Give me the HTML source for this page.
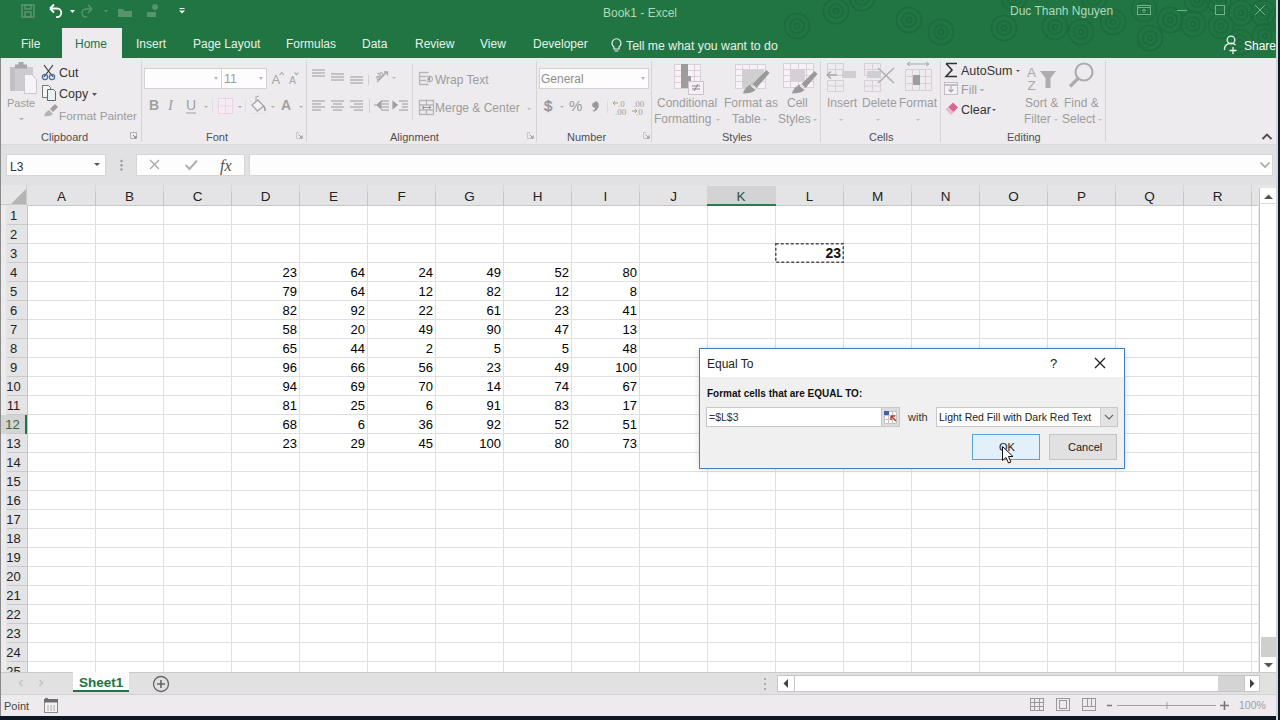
<!DOCTYPE html><html><head><meta charset="utf-8"><style>
*{margin:0;padding:0;box-sizing:border-box}
html,body{width:1280px;height:720px;overflow:hidden;position:relative;background:#fff;font-family:"Liberation Sans",sans-serif;color:#262626}
.a{position:absolute;white-space:nowrap}
#title{position:absolute;left:0;top:0;width:1280px;height:58px;background:#217542;overflow:hidden}
#ribbon{position:absolute;left:0;top:58px;width:1280px;height:87px;background:#edebee;border-bottom:1px solid #d9d9d9}
#band{position:absolute;left:0;top:145px;width:1280px;height:41px;background:#e1e0e2}
#colhdr{position:absolute;left:0;top:185px;width:1258px;height:21px;background:#e4e4e6;border-bottom:1px solid #c6c6c6}
.ch{position:absolute;top:0;width:68px;height:20px;padding-right:1px;text-align:center;font-size:13.5px;line-height:23px;color:#222;background:linear-gradient(#d6d6d6,#d6d6d6) no-repeat right 0 top 0/1px 7px,linear-gradient(#c4c4c4,#c4c4c4) no-repeat right 0 top 7px/1px 13px}
.ch.sel{background:#d3d3d3;border-bottom:2px solid #2e7a50;color:#2f4f3f;top:1px;height:20px;line-height:21px;width:69px;margin-left:-1px}
#rowhdr{position:absolute;left:0;top:205px;width:28px;height:467px;background:linear-gradient(to right,#8e8e8e 0 1px,#ececee 1px 6px,#e4e4e6 6px);border-right:1px solid #c6c6c6;overflow:hidden}
.rh{position:absolute;left:0;width:27px;height:19px;text-align:center;font-size:13px;line-height:20px;color:#222;background:linear-gradient(to right,transparent 7px,#cacaca 7px) no-repeat left 0 bottom 0/27px 1px}
#grid{position:absolute;left:28px;top:206px;width:1230px;height:466px;overflow:hidden;background-color:#fff;
background-image:linear-gradient(to right, transparent 67px, #dfdfdf 67px, #dfdfdf 68px, transparent 68px),linear-gradient(to bottom, transparent 18px, #dfdfdf 18px, #dfdfdf 19px, transparent 19px);
background-size:68px 19px, 68px 19px}
.cell{position:absolute;width:68px;height:19px;text-align:right;padding-right:3px;font-size:13px;line-height:20px;color:#000}
#l3{position:absolute;width:69px;height:20px;border:1px solid transparent;text-align:right;padding-right:2px;font-size:14px;line-height:19px;color:#111}
.tab{top:36px;font-size:12px;line-height:16px;color:#e6f3ea}
.r{position:absolute;white-space:nowrap;font-size:12px;line-height:14px;color:#333}
.d{color:#9c9c9c}
.gl{position:absolute;white-space:nowrap;font-size:11px;line-height:14px;color:#505050;top:130px}
.sep{position:absolute;top:61px;width:1px;height:81px;background:#d4d4d4}
.box{position:absolute;background:#fdfdfd;border:1px solid #d2d2d2}
.dd{position:absolute;width:0;height:0;border-left:2.5px solid transparent;border-right:2.5px solid transparent;border-top:3px solid #777}
.ddd{border-top-color:#b5b5b5}
.rh.sel{background-color:#d4d4d4;color:#2a6845;border-right:2px solid #217346}

</style></head><body>
<div id="title">
<svg class="a" style="left:0;top:0" width="1280" height="58">
<g fill="none" stroke="#1c6a3d" stroke-width="1.6" opacity="0.85"><circle cx="797" cy="26" r="2.5"/><circle cx="797" cy="26" r="7"/><circle cx="797" cy="26" r="12.5"/><circle cx="836" cy="11" r="2.5"/><circle cx="836" cy="11" r="7"/><circle cx="836" cy="11" r="12.5"/><circle cx="862" cy="-2" r="2.5"/><circle cx="862" cy="-2" r="7"/><circle cx="862" cy="-2" r="12.5"/><circle cx="909" cy="20" r="2.5"/><circle cx="909" cy="20" r="7"/><circle cx="909" cy="20" r="12.5"/><circle cx="941" cy="32" r="2.5"/><circle cx="941" cy="32" r="7"/><circle cx="941" cy="32" r="12.5"/><circle cx="1004" cy="28" r="2.5"/><circle cx="1004" cy="28" r="7"/><circle cx="1004" cy="28" r="12.5"/><circle cx="1014" cy="-2" r="2.5"/><circle cx="1014" cy="-2" r="7"/><circle cx="1014" cy="-2" r="12.5"/><circle cx="1055" cy="27" r="2.5"/><circle cx="1055" cy="27" r="7"/><circle cx="1055" cy="27" r="12.5"/><circle cx="1081" cy="32" r="2.5"/><circle cx="1081" cy="32" r="7"/><circle cx="1081" cy="32" r="12.5"/><circle cx="1094" cy="-2" r="2.5"/><circle cx="1094" cy="-2" r="7"/><circle cx="1094" cy="-2" r="12.5"/><circle cx="1113" cy="22" r="2.5"/><circle cx="1113" cy="22" r="7"/><circle cx="1113" cy="22" r="12.5"/><circle cx="1144" cy="9" r="2.5"/><circle cx="1144" cy="9" r="7"/><circle cx="1144" cy="9" r="12.5"/><circle cx="1170" cy="20" r="2.5"/><circle cx="1170" cy="20" r="7"/><circle cx="1170" cy="20" r="12.5"/><circle cx="1193" cy="24" r="2.5"/><circle cx="1193" cy="24" r="7"/><circle cx="1193" cy="24" r="12.5"/><circle cx="1197" cy="0" r="2.5"/><circle cx="1197" cy="0" r="7"/><circle cx="1197" cy="0" r="12.5"/><circle cx="1219" cy="0" r="2.5"/><circle cx="1219" cy="0" r="7"/><circle cx="1219" cy="0" r="12.5"/><circle cx="1221" cy="26" r="2.5"/><circle cx="1221" cy="26" r="7"/><circle cx="1221" cy="26" r="12.5"/><circle cx="1241" cy="13" r="2.5"/><circle cx="1241" cy="13" r="7"/><circle cx="1241" cy="13" r="12.5"/><circle cx="1263" cy="13" r="2.5"/><circle cx="1263" cy="13" r="7"/><circle cx="1263" cy="13" r="12.5"/><circle cx="1265" cy="36" r="2.5"/><circle cx="1265" cy="36" r="7"/><circle cx="1265" cy="36" r="12.5"/><circle cx="1150" cy="38" r="2.5"/><circle cx="1150" cy="38" r="7"/><circle cx="1150" cy="38" r="12.5"/><circle cx="1240" cy="42" r="2.5"/><circle cx="1240" cy="42" r="7"/><circle cx="1240" cy="42" r="12.5"/><circle cx="1280" cy="20" r="2.5"/><circle cx="1280" cy="20" r="7"/><circle cx="1280" cy="20" r="12.5"/></g>
<!-- QAT -->
<g fill="none" stroke="#56946c" stroke-width="1.6">
<rect x="22" y="5" width="12" height="12"/><rect x="25" y="5" width="6" height="4"/><rect x="25" y="12" width="6" height="5"/>
</g>
<path d="M50 8.5 L54 4.5 M50 8.5 L54 12.5 M50 8.5 H57 a4.3 4.3 0 0 1 0 8.6 H56" fill="none" stroke="#fff" stroke-width="1.8"/>
<path d="M70 10 h5 l-2.5 3z" fill="#fff"/>
<path d="M92 9 L88 5 M92 9 L88 13 M92 9 H86 a4 4 0 0 0 0 8 H87" fill="none" stroke="#56946c" stroke-width="1.6"/>
<path d="M104 10 h4 l-2 2.5z" fill="#56946c"/>
<path d="M118 9 h5 l1 2 h8 v6 h-14z" fill="#56946c"/>
<path d="M147 12 h9 v5 h-9z M152 7 a3 3 0 1 1 6 0 a3 3 0 1 1 -6 0" fill="#56946c"/>
<path d="M179.5 8.5 h5" stroke="#fff" stroke-width="1"/><path d="M179 10.5 h6 l-3 3z" fill="#fff"/>
</svg>
<div class="a" style="left:603px;top:5px;font-size:12px;line-height:16px;color:#b2d8bc">Book1 - Excel</div>
<div class="a" style="left:1010px;top:3px;font-size:12px;line-height:16px;color:#b2d8bc">Duc Thanh Nguyen</div>
<svg class="a" style="left:1130px;top:0" width="150" height="58">
<g fill="none" stroke="#74b08a" stroke-width="1">
<rect x="7.5" y="5.5" width="13" height="9"/><path d="M7.5 7.5 h13 M14 13 v-4 M12 11 l2 -2 l2 2"/>
<path d="M47 10.5 h10"/>
<rect x="85.5" y="5.5" width="9" height="9"/>
<path d="M125 5 l10 10 M135 5 l-10 10"/>
</g>
<g fill="none" stroke="#eef5f0" stroke-width="1.3">
<circle cx="101" cy="40" r="3.8"/><path d="M94.5 50 a6.5 6 0 0 1 11 -5 M104 43 v0 M103 47 v7 M99.5 50.5 h7"/>
</g>
</svg>
<div class="a" style="left:1244px;top:38px;font-size:12px;line-height:16px;color:#fff">Share</div>
<!-- tabs -->
<div class="a" style="left:62px;top:28px;width:60px;height:30px;background:#edebee"></div>
<div class="a tab" style="left:21px">File</div>
<div class="a tab" style="left:75px;color:#217346">Home</div>
<div class="a tab" style="left:136px">Insert</div>
<div class="a tab" style="left:193px">Page Layout</div>
<div class="a tab" style="left:286px">Formulas</div>
<div class="a tab" style="left:362px">Data</div>
<div class="a tab" style="left:415px">Review</div>
<div class="a tab" style="left:480px">View</div>
<div class="a tab" style="left:533px">Developer</div>
<svg class="a" style="left:609px;top:37px" width="16" height="18"><path d="M5 12 v-2 a4.5 4.5 0 1 1 5 0 v2z M5.5 14 h4" fill="none" stroke="#e8f1ea" stroke-width="1.2"/></svg>
<div class="a tab" style="left:626px;top:38px;font-size:12.3px">Tell me what you want to do</div>
</div>
<div id="ribbon"></div>
<div id="band"></div>
<!-- formula bar -->
<div class="box" style="left:6px;top:154px;width:100px;height:22px;border-color:#d6d6d6"></div>
<div class="r" style="left:10px;top:160px;font-size:12px;color:#333">L3</div>
<div class="dd" style="left:94px;top:163px;border-left-width:3.5px;border-right-width:3.5px;border-top-width:3.5px;border-top-color:#555"></div>
<svg class="a" style="left:118px;top:158px" width="8" height="16"><circle cx="3.5" cy="3" r="1.2" fill="#999"/><circle cx="3.5" cy="7.3" r="1.2" fill="#999"/><circle cx="3.5" cy="11.5" r="1.2" fill="#999"/></svg>
<div class="box" style="left:136px;top:154px;width:109px;height:22px;border-color:#d6d6d6"></div>
<svg class="a" style="left:137px;top:154px" width="108" height="22">
<path d="M13 6 l9 9 M22 6 l-9 9" stroke="#a8a8a8" stroke-width="1.3"/>
<path d="M48.5 11 l4 4 l7.5 -8.5" stroke="#b0b0b0" stroke-width="2" fill="none"/>
<text x="83" y="16.5" font-family="Liberation Serif" font-style="italic" font-size="16" fill="#505050">fx</text>
</svg>
<div class="box" style="left:249px;top:154px;width:1024px;height:22px;border-color:#d6d6d6"></div>
<svg class="a" style="left:1258px;top:159px" width="14" height="12"><path d="M2.5 3.5 l4.5 4.5 l4.5 -4.5" fill="none" stroke="#a8a8a8" stroke-width="1.7"/></svg>

<!-- Clipboard -->
<svg class="a" style="left:0;top:58px" width="141" height="86">
<path d="M10 9 h23 v24 h-23z" fill="#cdcbcf"/>
<path d="M10 9 h5 v24 h-5z" fill="#c2c0c4"/>
<path d="M15 6.5 h12 v4 h-12z" fill="#a8a6aa"/><path d="M18.5 4 h5 v3 h-5z" fill="#a8a6aa"/>
<path d="M24.5 16.5 h7 l5 5 v14 h-12z" fill="#f8f3f8" stroke="#cfc8cf" stroke-width="1"/>
<path d="M44 7 l9 12 M53 7 l-9 12" stroke="#3a3a3a" stroke-width="1.2" fill="none"/>
<circle cx="45" cy="19" r="2.6" fill="none" stroke="#4a72a8" stroke-width="1.3"/><circle cx="52" cy="19" r="2.6" fill="none" stroke="#4a72a8" stroke-width="1.3"/>
<path d="M42.5 27.5 h6 l2 2 v10 h-8z" fill="#f5f5f5" stroke="#777" stroke-width="1"/>
<path d="M47.5 31.5 h6 l2 2 v9 h-8z" fill="#e8f2f2" stroke="#666" stroke-width="1"/>
<path d="M44 58 q1 -4 5 -6 l4 4 q-3 3 -9 2z" fill="#b4b4b4"/><path d="M50 51 l5 -5 l3 3 l-5 5z" fill="#a0a0a0"/>
<path d="M19 60 h5 l-2.5 2.5z" fill="#b0b0b0"/>
<path d="M92 35 h5 l-2.5 3z" fill="#555"/>
<path d="M130.5 74.5 h6 v6 h-6z" fill="none" stroke="#b0b0b0" stroke-width="1"/><path d="M133 77 l3 3 M136 78 v2 h-2" stroke="#808080" fill="none"/>
</svg>
<div class="r d" style="left:7px;top:96px;font-size:11px">Paste</div>
<div class="r" style="left:59px;top:66px;font-size:12.5px">Cut</div>
<div class="r" style="left:59px;top:87px;font-size:12.5px">Copy</div>
<div class="r d" style="left:59px;top:109px;font-size:11.8px">Format Painter</div>
<div class="gl" style="left:41px">Clipboard</div>
<div class="sep" style="left:141px"></div>
<!-- Font -->
<div class="box" style="left:144px;top:68px;width:78px;height:21px"></div>
<div class="box" style="left:221px;top:68px;width:46px;height:21px"></div>
<div class="dd ddd" style="left:214px;top:77px"></div>
<div class="dd ddd" style="left:259px;top:77px"></div>
<div class="r d" style="left:224px;top:72px;font-size:12.5px">11</div>
<svg class="a" style="left:142px;top:58px" width="165" height="86">
<text x="129.5" y="25.5" font-family="Liberation Sans" font-size="13" fill="#a6a6a6">A</text>
<path d="M137.5 17 l2.2 -2.5 l2.2 2.5" stroke="#a6a6a6" stroke-width="1.1" fill="none"/>
<text x="147" y="25.5" font-family="Liberation Sans" font-size="10.5" fill="#a6a6a6">A</text>
<path d="M152.5 14.5 l2 2.2 l2 -2.2" stroke="#a6a6a6" stroke-width="1.1" fill="none"/>
<text x="7" y="52" font-family="Liberation Sans" font-weight="bold" font-size="14" fill="#a0a0a0">B</text>
<text x="26" y="52" font-family="Liberation Serif" font-style="italic" font-size="15" fill="#a0a0a0">I</text>
<text x="44" y="52" font-family="Liberation Sans" font-size="14" fill="#a0a0a0">U</text>
<path d="M44 55 h10" stroke="#a0a0a0" stroke-width="1"/>
<path d="M62 48 h4 l-2 2z M96 48 h4 l-2 2z M129 48 h4 l-2 2z M157 48 h4 l-2 2z" fill="#b0b0b0"/>
<path d="M70.5 41 v14 M103.5 41 v14" stroke="#e0e0e0"/>
<rect x="76.5" y="40.5" width="14" height="15" fill="#f6eef5" stroke="#ecd2e6"/><path d="M83.5 40.5 v15 M76.5 48 h14" stroke="#ecd2e6"/><path d="M80 40.5 v15 M87 40.5 v15 M76.5 44 h14 M76.5 52 h14" stroke="#f2e2ee" stroke-dasharray="1 1"/>
<path d="M110 47 l6 -5 l5.5 6 l-6 5z" fill="#f4f4f4" stroke="#a8a8a8" stroke-width="1.3"/><path d="M114 43 v-4 l3 -1" stroke="#b0b0b0" fill="none" stroke-width="1.2"/><path d="M121.5 48 q2 2 1.5 5" stroke="#9a9a9a" stroke-width="1.5" fill="none"/><path d="M109 55.5 h15" stroke="#e4e4e4" stroke-width="1.5"/>
<text x="139" y="52" font-family="Liberation Sans" font-weight="bold" font-size="14" fill="#a0a0a0">A</text>
<path d="M157.5 74.5 h-3 v6 h6 v-3" fill="none" stroke="#c8c8c8" stroke-width="1"/><path d="M156.5 76.5 l3.5 3.5 M160.0 77.5 v2.5 h-2.5" fill="none" stroke="#9a9a9a" stroke-width="1"/>
</svg>
<div class="gl" style="left:206px">Font</div>
<div class="sep" style="left:306px"></div>
<!-- Alignment -->
<svg class="a" style="left:306px;top:58px" width="230" height="86">
<g stroke="#b6b6b6" stroke-width="1.3" fill="none">
<path d="M6 12 h13 M6 15 h13 M6 18 h13"/>
<path d="M25 16 h13 M25 19 h13 M25 22 h13"/>
<path d="M44 19 h13 M44 22 h13 M44 25 h13"/>
<path d="M62.5 17 v10" stroke="#d0d0d0" stroke-width="1"/>
<path d="M6 43 h13 M6 46 h9 M6 49 h13 M6 52 h9"/>
<path d="M25 43 h13 M27 46 h9 M25 49 h13 M27 52 h9"/>
<path d="M44 43 h13 M48 46 h9 M44 49 h13 M48 52 h9"/>
<path d="M63.5 41 v14" stroke="#d0d0d0" stroke-width="1"/>
<path d="M75 43 h8 M76 46 h7 M76 49 h7 M75 52 h8"/>
<path d="M93 43 h9 M96 46 h6 M96 49 h6 M93 52 h9"/>
<path d="M113.5 14.5 h9 M113.5 18.5 h7 M113.5 22.5 h7 M113.5 26.5 h9 M113.5 14 v13"/>
<path d="M121 18.5 h3 a2.5 2.5 0 0 1 0 5 h-3"/>
<path d="M113.5 42.5 h14 v14 h-14z M113.5 47 h14 M113.5 52 h14 M120.5 42.5 v4.5 M120.5 52 v4.5"/>
</g>
<path d="M71 47 l4 -3.5 v7z M68 47 h5" fill="#a0a0a0" stroke="#a0a0a0" stroke-width="1.2"/>
<path d="M91 47 l-4 -3.5 v7z M88 47 h4" fill="#a0a0a0" stroke="#a0a0a0" stroke-width="1.2"/>
<path d="M106.5 6 v56" stroke="#d8d8d8" stroke-width="1"/>
<path d="M71 24 l10 -10 M78 14 h3.5 v3.5" stroke="#a8a8a8" stroke-width="1.3" fill="none"/>
<text x="69" y="20" font-family="Liberation Sans" font-size="8" font-weight="bold" fill="#a8a8a8" transform="rotate(-45 74 18)">ab</text>
<path d="M116 49.5 h9 M116 49.5 l2 -1.5 M116 49.5 l2 1.5 M125 49.5 l-2 -1.5 M125 49.5 l-2 1.5" stroke="#999" stroke-width="1" fill="none"/>
<path d="M121 21 l3 -2.5 v5z" fill="#999"/>
<path d="M86 19 h4 l-2 2z M221 50 h4 l-2 2z" fill="#b8b8b8"/>
<path d="M224.5 74.5 h-3 v6 h6 v-3" fill="none" stroke="#c8c8c8" stroke-width="1"/><path d="M223.5 76.5 l3.5 3.5 M227.0 77.5 v2.5 h-2.5" fill="none" stroke="#9a9a9a" stroke-width="1"/>
</svg>
<div class="r d" style="left:435px;top:73px;font-size:12px">Wrap Text</div>
<div class="r d" style="left:435px;top:101px;font-size:12px">Merge &amp; Center</div>
<div class="gl" style="left:390px">Alignment</div>
<div class="sep" style="left:536px"></div>
<!-- Number -->
<div class="box" style="left:539px;top:68px;width:110px;height:21px"></div>
<div class="r d" style="left:541px;top:72px;font-size:12px;color:#8f8f8f">General</div>
<div class="dd ddd" style="left:641px;top:77px"></div>
<svg class="a" style="left:536px;top:58px" width="115" height="86">
<text x="8" y="53" font-family="Liberation Sans" font-size="15" fill="#959595" stroke="#959595" stroke-width="0.4">$</text>
<path d="M24 48 h4 l-2 2z" fill="#b0b0b0"/>
<text x="33" y="53" font-family="Liberation Sans" font-size="15" fill="#9a9a9a">%</text>
<path d="M59 44 a3 3 0 1 1 0 6 M61.8 47.5 q0 4 -4.5 5.5" fill="#9a9a9a" stroke="#9a9a9a" stroke-width="1.6"/><circle cx="59" cy="47" r="2.8" fill="#9a9a9a"/>
<path d="M71.5 43 v12" stroke="#dcdcdc"/>
<g font-family="Liberation Serif" font-size="9" fill="#a0a0a0"><text x="82" y="49">.0</text><text x="79" y="57">.00</text><text x="97" y="49">.00</text><text x="100" y="57">.0</text></g>
<path d="M77 45 h5 M77 45 l2 -2 M77 45 l2 2 M96 53 h5 M101 53 l-2 -2 M101 53 l-2 2" stroke="#a0a0a0" fill="none"/>
<path d="M110.5 74.5 h-3 v6 h6 v-3" fill="none" stroke="#c8c8c8" stroke-width="1"/><path d="M109.5 76.5 l3.5 3.5 M113.0 77.5 v2.5 h-2.5" fill="none" stroke="#9a9a9a" stroke-width="1"/>
</svg>
<div class="gl" style="left:567px">Number</div>
<div class="sep" style="left:651px"></div>
<!-- Styles -->
<svg class="a" style="left:651px;top:58px" width="170" height="86">
<g stroke="#dccfdc" fill="#f8f2f8">
<rect x="23.5" y="6.5" width="26" height="24"/>
<rect x="84.5" y="6.5" width="30" height="24"/>
<rect x="132.5" y="5.5" width="30" height="24"/>
</g>
<g stroke="#dccfdc" stroke-width="1">
<path d="M23.5 12.5 h26 M23.5 18.5 h26 M23.5 24.5 h26 M30.5 6.5 v24 M36.5 6.5 v24 M43.5 6.5 v24"/>
<path d="M84.5 11.5 h30 M84.5 17.5 h30 M84.5 23.5 h30 M91.5 6.5 v24 M98.5 6.5 v24 M106.5 6.5 v24"/>
<path d="M132.5 11.5 h30 M132.5 17.5 h30 M132.5 23.5 h30 M139.5 5.5 v24 M147.5 5.5 v24 M155.5 5.5 v24"/>
</g>
<path d="M30 6 h7 v12 h3 v12 h-10z" fill="#9c9c9c"/>
<rect x="37.5" y="23.5" width="15" height="13" fill="#f6eff6" stroke="#cfc3cf"/>
<path d="M41 28 h8 M41 31 h8 M47 26 l-4 7" stroke="#888" stroke-width="1"/>
<path d="M91 12 h22 v2 l-13 16 h-9z" fill="#cfcfcf"/>
<path d="M92 35.5 q1.5 -6.5 8 -9 l5.5 4.5 q-3.5 4.5 -13.5 4.5z" fill="#9a9a9a"/><path d="M101.5 26 l14 -14 l3 3 l-13 15z" fill="#9a9a9a"/><path d="M100 27.5 l5 4" stroke="#f4f0f4" stroke-width="1.2"/>
<rect x="139" y="11" width="15" height="12" fill="#d6d0d6"/>
<path d="M141 35.5 q1.5 -6.5 8 -9 l5.5 4.5 q-3.5 4.5 -13.5 4.5z" fill="#9a9a9a"/><path d="M150.5 26 l13 -13 l3 3 l-12 14z" fill="#9a9a9a"/><path d="M149 27.5 l5 4" stroke="#f4f0f4" stroke-width="1.2"/>
<path d="M65 61 h4 l-2 2z M112 61 h4 l-2 2z M162 61 h4 l-2 2z" fill="#b8b8b8"/>
</svg>
<div class="r d" style="left:657px;top:96px;font-size:12px">Conditional</div>
<div class="r d" style="left:654px;top:112px;font-size:12px">Formatting</div>
<div class="r d" style="left:724px;top:96px;font-size:12px">Format as</div>
<div class="r d" style="left:732px;top:112px;font-size:12px">Table</div>
<div class="r d" style="left:787px;top:96px;font-size:12px">Cell</div>
<div class="r d" style="left:778px;top:112px;font-size:12px">Styles</div>
<div class="gl" style="left:722px">Styles</div>
<div class="sep" style="left:820px"></div>
<!-- Cells -->
<svg class="a" style="left:820px;top:58px" width="120" height="86">
<g fill="none" stroke="#d8cdd8">
<path d="M7.5 5.5 h16 v12 h-16z M15.5 5.5 v12 M7.5 11.5 h16"/>
<path d="M7.5 22.5 h16 v11 h-16z M15.5 22.5 v11 M7.5 28 h16"/>
<path d="M44.5 5.5 h16 v12 h-16z M52.5 5.5 v12 M44.5 11.5 h16"/>
<path d="M44.5 22.5 h16 v11 h-16z M52.5 22.5 v11 M44.5 28 h16"/>
<path d="M85.5 11.5 h26 v21 h-26z M92.5 11.5 v21 M99.5 11.5 v21 M105.5 11.5 v21 M85.5 18.5 h26 M85.5 25.5 h26"/>
</g>
<rect x="22" y="13" width="14" height="7" fill="#cfcfcf"/>
<path d="M7 17 h10 M7 17 l4 -3.5 M7 17 l4 3.5" stroke="#aaa" stroke-width="1.6" fill="none"/>
<rect x="47" y="13" width="14" height="7" fill="#cfcfcf"/>
<path d="M58 10 l16 15 M58 25 l16 -15" stroke="#b0b0b0" stroke-width="1.6"/>
<path d="M87 6 h22 M87 6 l3 -2 M87 6 l3 2 M109 6 l-3 -2 M109 6 l-3 2" stroke="#a8a8a8" fill="none"/>
<rect x="93" y="17" width="7" height="10" fill="#9c9c9c"/>
<path d="M19 61 h4 l-2 2z M56 61 h4 l-2 2z M96 61 h4 l-2 2z" fill="#c0c0c0"/>
</svg>
<div class="r d" style="left:827px;top:96px;font-size:12px">Insert</div>
<div class="r d" style="left:862px;top:96px;font-size:12px">Delete</div>
<div class="r d" style="left:899px;top:96px;font-size:12px">Format</div>
<div class="gl" style="left:869px">Cells</div>
<div class="sep" style="left:940px"></div>
<!-- Editing -->
<svg class="a" style="left:940px;top:58px" width="170" height="86">
<path d="M6 5.5 h11 M6 5.5 l6 6.5 l-6 6.5 h11" fill="none" stroke="#333" stroke-width="1.6"/>
<rect x="4.5" y="24.5" width="13" height="12" fill="#f4f0f4" stroke="#c8bcc8"/><path d="M4.5 27 h13" stroke="#c8bcc8" stroke-width="2"/>
<path d="M11 28 v6 M8.5 31.5 l2.5 2.5 l2.5 -2.5" stroke="#aaa" fill="none" stroke-width="1.2"/>
<path d="M6 51.5 l7 -7 l5 5 l-7 7z" fill="#d9668f"/><path d="M6 51.5 l2.5 -2.5 l5 5 l-2.5 2.5z" fill="#f2b8cc"/>
<path d="M76 12 h4 l-2 2z M40 31 h4 l-2 2z M52 51 h4 l-2 2z" fill="#555"/>
<path d="M40 31 h4 l-2 2z" fill="#c0c0c0"/>
<text x="87" y="19" font-family="Liberation Sans" font-size="13.5" fill="#aaaaaa">A</text>
<text x="87.5" y="32" font-family="Liberation Sans" font-size="13.5" fill="#aaaaaa">Z</text>
<path d="M100 13 h16 l-5.5 7 v10 h-5 v-10z" fill="#adadad"/>
<circle cx="144" cy="14" r="8.5" fill="none" stroke="#adadad" stroke-width="2.2"/>
<path d="M138 20.5 l-8 8" stroke="#adadad" stroke-width="3.2"/>
<path d="M114 61 h4 l-2 2z M158 61 h4 l-2 2z" fill="#c0c0c0"/>
</svg>
<div class="r" style="left:961px;top:64px;font-size:12.5px">AutoSum</div>
<div class="r d" style="left:961px;top:83px;font-size:12.5px">Fill</div>
<div class="r" style="left:961px;top:103px;font-size:12.5px">Clear</div>
<div class="r d" style="left:1025px;top:96px;font-size:12px">Sort &amp;</div>
<div class="r d" style="left:1024px;top:112px;font-size:12px">Filter</div>
<div class="r d" style="left:1064px;top:96px;font-size:12px">Find &amp;</div>
<div class="r d" style="left:1062px;top:112px;font-size:12px">Select</div>
<div class="gl" style="left:1007px">Editing</div>
<div class="sep" style="left:1105px"></div>
<svg class="a" style="left:1259px;top:131px" width="16" height="12"><path d="M3.5 8 l4.5 -4.5 l4.5 4.5" fill="none" stroke="#4a4a4a" stroke-width="1.8"/></svg>

<div id="colhdr">
<div class="ch" style="left:28px">A</div>
<div class="ch" style="left:96px">B</div>
<div class="ch" style="left:164px">C</div>
<div class="ch" style="left:232px">D</div>
<div class="ch" style="left:300px">E</div>
<div class="ch" style="left:368px">F</div>
<div class="ch" style="left:436px">G</div>
<div class="ch" style="left:504px">H</div>
<div class="ch" style="left:572px">I</div>
<div class="ch" style="left:640px">J</div>
<div class="ch sel" style="left:708px">K</div>
<div class="ch" style="left:776px">L</div>
<div class="ch" style="left:844px">M</div>
<div class="ch" style="left:912px">N</div>
<div class="ch" style="left:980px">O</div>
<div class="ch" style="left:1048px">P</div>
<div class="ch" style="left:1116px">Q</div>
<div class="ch" style="left:1184px">R</div>
</div>
<div id="rowhdr">
<div class="rh" style="top:1px">1</div>
<div class="rh" style="top:20px">2</div>
<div class="rh" style="top:39px">3</div>
<div class="rh" style="top:58px">4</div>
<div class="rh" style="top:77px">5</div>
<div class="rh" style="top:96px">6</div>
<div class="rh" style="top:115px">7</div>
<div class="rh" style="top:134px">8</div>
<div class="rh" style="top:153px">9</div>
<div class="rh" style="top:172px">10</div>
<div class="rh" style="top:191px">11</div>
<div class="rh sel" style="top:210px">12</div>
<div class="rh" style="top:229px">13</div>
<div class="rh" style="top:248px">14</div>
<div class="rh" style="top:267px">15</div>
<div class="rh" style="top:286px">16</div>
<div class="rh" style="top:305px">17</div>
<div class="rh" style="top:324px">18</div>
<div class="rh" style="top:343px">19</div>
<div class="rh" style="top:362px">20</div>
<div class="rh" style="top:381px">21</div>
<div class="rh" style="top:400px">22</div>
<div class="rh" style="top:419px">23</div>
<div class="rh" style="top:438px">24</div>
<div class="rh" style="top:457px">25</div>
</div>
<div id="grid">
<div class="cell" style="left:204px;top:57px">23</div>
<div class="cell" style="left:272px;top:57px">64</div>
<div class="cell" style="left:340px;top:57px">24</div>
<div class="cell" style="left:408px;top:57px">49</div>
<div class="cell" style="left:476px;top:57px">52</div>
<div class="cell" style="left:544px;top:57px">80</div>
<div class="cell" style="left:204px;top:76px">79</div>
<div class="cell" style="left:272px;top:76px">64</div>
<div class="cell" style="left:340px;top:76px">12</div>
<div class="cell" style="left:408px;top:76px">82</div>
<div class="cell" style="left:476px;top:76px">12</div>
<div class="cell" style="left:544px;top:76px">8</div>
<div class="cell" style="left:204px;top:95px">82</div>
<div class="cell" style="left:272px;top:95px">92</div>
<div class="cell" style="left:340px;top:95px">22</div>
<div class="cell" style="left:408px;top:95px">61</div>
<div class="cell" style="left:476px;top:95px">23</div>
<div class="cell" style="left:544px;top:95px">41</div>
<div class="cell" style="left:204px;top:114px">58</div>
<div class="cell" style="left:272px;top:114px">20</div>
<div class="cell" style="left:340px;top:114px">49</div>
<div class="cell" style="left:408px;top:114px">90</div>
<div class="cell" style="left:476px;top:114px">47</div>
<div class="cell" style="left:544px;top:114px">13</div>
<div class="cell" style="left:204px;top:133px">65</div>
<div class="cell" style="left:272px;top:133px">44</div>
<div class="cell" style="left:340px;top:133px">2</div>
<div class="cell" style="left:408px;top:133px">5</div>
<div class="cell" style="left:476px;top:133px">5</div>
<div class="cell" style="left:544px;top:133px">48</div>
<div class="cell" style="left:204px;top:152px">96</div>
<div class="cell" style="left:272px;top:152px">66</div>
<div class="cell" style="left:340px;top:152px">56</div>
<div class="cell" style="left:408px;top:152px">23</div>
<div class="cell" style="left:476px;top:152px">49</div>
<div class="cell" style="left:544px;top:152px">100</div>
<div class="cell" style="left:204px;top:171px">94</div>
<div class="cell" style="left:272px;top:171px">69</div>
<div class="cell" style="left:340px;top:171px">70</div>
<div class="cell" style="left:408px;top:171px">14</div>
<div class="cell" style="left:476px;top:171px">74</div>
<div class="cell" style="left:544px;top:171px">67</div>
<div class="cell" style="left:204px;top:190px">81</div>
<div class="cell" style="left:272px;top:190px">25</div>
<div class="cell" style="left:340px;top:190px">6</div>
<div class="cell" style="left:408px;top:190px">91</div>
<div class="cell" style="left:476px;top:190px">83</div>
<div class="cell" style="left:544px;top:190px">17</div>
<div class="cell" style="left:204px;top:209px">68</div>
<div class="cell" style="left:272px;top:209px">6</div>
<div class="cell" style="left:340px;top:209px">36</div>
<div class="cell" style="left:408px;top:209px">92</div>
<div class="cell" style="left:476px;top:209px">52</div>
<div class="cell" style="left:544px;top:209px">51</div>
<div class="cell" style="left:204px;top:228px">23</div>
<div class="cell" style="left:272px;top:228px">29</div>
<div class="cell" style="left:340px;top:228px">45</div>
<div class="cell" style="left:408px;top:228px">100</div>
<div class="cell" style="left:476px;top:228px">80</div>
<div class="cell" style="left:544px;top:228px">73</div>
<div id="l3" style="left:747px;top:37px"><b>23</b></div>
<svg class="a" style="left:747px;top:37px" width="69" height="20"><rect x="0.75" y="0.75" width="67.5" height="18.5" fill="none" stroke="#505050" stroke-width="1.5" stroke-dasharray="3 2"/></svg>
</div>
<!-- corner -->
<div class="a" style="left:0;top:185px;width:27px;height:20px;background:#e6e6e6;border-right:1px solid #c9c9c9;border-bottom:1px solid #c9c9c9"></div>
<svg class="a" style="left:10px;top:188px" width="17" height="17"><path d="M1 16 L16 1 V16z" fill="#b5b5b5"/></svg>
<!-- vertical scrollbar -->
<div class="a" style="left:1258px;top:185px;width:19px;height:487px;background:#e6e6e6"></div>
<div class="a" style="left:1259px;top:188px;width:17px;height:484px;background:#fff;border-left:1px solid #c4c4c4"></div>
<div class="a" style="left:1260px;top:188px;width:17px;height:16px;border-bottom:1px solid #dadada"></div>
<svg class="a" style="left:1260px;top:190px" width="17" height="14"><path d="M4 9 h9 l-4.5 -4.5z" fill="#555"/></svg>
<div class="a" style="left:1261px;top:637px;width:16px;height:20px;background:#cfcfcf"></div>
<svg class="a" style="left:1260px;top:658px" width="17" height="14"><path d="M4 5 h9 l-4.5 4.5z" fill="#555"/></svg>
<!-- tab bar -->
<div class="a" style="left:0;top:672px;width:1280px;height:23px;background:#e1e1e1;border-top:1px solid #cacaca"></div>
<svg class="a" style="left:14px;top:676px" width="40" height="14"><path d="M8.5 4 l-3 3 l3 3 M25.5 4 l3 3 l-3 3" fill="none" stroke="#c4c4c4" stroke-width="1.6"/></svg>
<div class="a" style="left:73px;top:672px;width:56px;height:20px;background:#fdfdfd;border-bottom:2px solid #217346"></div>
<div class="a" style="left:79px;top:675px;font-size:13.5px;line-height:16px;font-weight:bold;color:#217346">Sheet1</div>
<svg class="a" style="left:152px;top:675px" width="20" height="20"><circle cx="9" cy="9" r="7.5" fill="none" stroke="#666" stroke-width="1.3"/><path d="M9 5 v8 M5 9 h8" stroke="#666" stroke-width="1.6"/></svg>
<svg class="a" style="left:760px;top:676px" width="10" height="16"><circle cx="5" cy="3" r="1" fill="#999"/><circle cx="5" cy="8" r="1" fill="#999"/><circle cx="5" cy="13" r="1" fill="#999"/></svg>
<div class="a" style="left:777px;top:675px;width:483px;height:17px;background:#fff;border:1px solid #c6c6c6"></div>
<div class="a" style="left:794px;top:676px;width:1px;height:15px;background:#c6c6c6"></div>
<svg class="a" style="left:778px;top:676px" width="16" height="15"><path d="M10 3 v9 l-4.5 -4.5z" fill="#444"/></svg>
<div class="a" style="left:1218px;top:676px;width:26px;height:15px;background:#d4d4d4"></div>
<div class="a" style="left:1244px;top:676px;width:1px;height:15px;background:#c6c6c6"></div>
<svg class="a" style="left:1244px;top:676px" width="16" height="15"><path d="M6 3 v9 l4.5 -4.5z" fill="#444"/></svg>
<!-- status -->
<div id="status" class="a" style="left:0;top:694px;width:1280px;height:22px;background:#edebee;border-top:1px solid #d2d2d2"></div>
<div class="a" style="left:4px;top:699px;font-size:11px;line-height:15px;color:#444">Point</div>
<svg class="a" style="left:43px;top:697px" width="17" height="17"><rect x="1.5" y="3.5" width="13" height="12" fill="#f2f2f2" stroke="#8a8a8a"/><rect x="1" y="2" width="14" height="3.5" fill="#6e6e6e"/><circle cx="3.5" cy="2.5" r="1.8" fill="#6e6e6e"/><path d="M5 8 v6 M8 8 v6 M11 8 v6" stroke="#aaa"/></svg>
<svg class="a" style="left:1025px;top:696px" width="250" height="18">
<g fill="none" stroke="#9a9a9a" stroke-width="1">
<rect x="5.5" y="2.5" width="13" height="12"/><path d="M5.5 6.5 h13 M5.5 10.5 h13 M9.5 2.5 v12 M14.5 2.5 v12"/>
<rect x="31.5" y="2.5" width="13" height="12"/><rect x="34.5" y="4.5" width="7" height="8"/>
<rect x="57.5" y="2.5" width="13" height="12"/><path d="M57.5 10.5 h13 M62.5 2.5 v8 M66.5 2.5 v8"/>
</g>
<path d="M82 9.5 h5" stroke="#777" stroke-width="1.5"/>
<path d="M92 9.5 h99" stroke="#a0a0a0" stroke-width="1"/>
<path d="M142 6 v7" stroke="#a0a0a0" stroke-width="1"/>
<path d="M195 9.5 h9 M199.5 5 v9" stroke="#777" stroke-width="1.6"/>
</svg>
<div class="a" style="left:1239px;top:698px;font-size:10.5px;line-height:15px;color:#a0a0a0">100%</div>
<div class="a" style="left:0;top:716px;width:1280px;height:4px;background:#0e1824"></div>
<div class="a" style="left:0;top:58px;width:1px;height:658px;background:#8a8a8a"></div>
<div class="a" style="left:1276px;top:0;width:2px;height:720px;background:#d0d6de"></div>
<div class="a" style="left:1278px;top:0;width:2px;height:720px;background:#121a26"></div>

<div class="a" style="left:699px;top:348px;width:426px;height:121px;background:#f0f0f0;border:1px solid #3f7fc3;box-shadow:0 0 6px rgba(0,0,0,0.15)"></div>
<div class="a" style="left:700px;top:349px;width:424px;height:28px;background:#fff"></div>
<div class="a" style="left:707px;top:356px;font-size:12px;line-height:16px;color:#222">Equal To</div>
<div class="a" style="left:1050px;top:356px;font-size:13px;line-height:16px;color:#222">?</div>
<svg class="a" style="left:1092px;top:355px" width="16" height="16"><path d="M3 3 l10 10 M13 3 l-10 10" stroke="#222" stroke-width="1.3"/></svg>
<div class="a" style="left:707px;top:386px;font-size:10px;line-height:15px;font-weight:bold;color:#111">Format cells that are EQUAL TO:</div>
<div class="a" style="left:706px;top:407px;width:176px;height:20px;background:#fff;border:1px solid #c8c8c8"></div>
<div class="a" style="left:709px;top:410px;font-size:10.5px;line-height:15px;color:#333">=$L$3</div>
<div class="a" style="left:881px;top:407px;width:19px;height:20px;background:#dcdcdc;border:1px solid #c8c8c8"></div>
<svg class="a" style="left:882px;top:408px" width="17" height="18">
<rect x="2" y="3" width="13" height="13" fill="#fafafa"/><g fill="none" stroke="#c4c4c4"><path d="M2.5 3.5 h12 v12 h-12z M2.5 7.5 h12 M2.5 11.5 h12 M6.5 3.5 v12 M10.5 3.5 v12"/></g>
<rect x="2" y="3" width="5" height="4" fill="#3a63a8"/><path d="M14 13 l-5 -5 M9 8 h4 M9 8 v4" stroke="#c0392b" stroke-width="1.4" fill="none"/>
</svg>
<div class="a" style="left:908px;top:410px;font-size:11px;line-height:15px;color:#333">with</div>
<div class="a" style="left:936px;top:407px;width:182px;height:20px;background:#fff;border:1px solid #c8c8c8"></div>
<div class="a" style="left:1100px;top:408px;width:17px;height:18px;background:#e3e3e3;border-left:1px solid #d0d0d0"></div>
<svg class="a" style="left:1101px;top:409px" width="16" height="16"><path d="M4 6 l4 4 l4 -4" fill="none" stroke="#666" stroke-width="1.1"/></svg>
<div class="a" style="left:939px;top:410px;font-size:10.5px;line-height:15px;color:#222">Light Red Fill with Dark Red Text</div>
<div class="a" style="left:972px;top:434px;width:68px;height:26px;background:#e3eff9;border:1px solid #56a3d9"></div>
<div class="a" style="left:999px;top:440px;font-size:11px;line-height:15px;color:#222">OK</div>
<div class="a" style="left:1049px;top:434px;width:68px;height:26px;background:#e1e1e1;border:1px solid #c4c4c4"></div>
<div class="a" style="left:1068px;top:440px;font-size:11px;line-height:15px;color:#222">Cancel</div>
<svg class="a" style="left:1000px;top:444px" width="18" height="22"><path d="M2.5 2.5 v14 l3.5 -3 l2.5 5.5 l2.5 -1 l-2.5 -5.5 h4.5z" fill="#fff" stroke="#111" stroke-width="1"/></svg>

</body></html>
